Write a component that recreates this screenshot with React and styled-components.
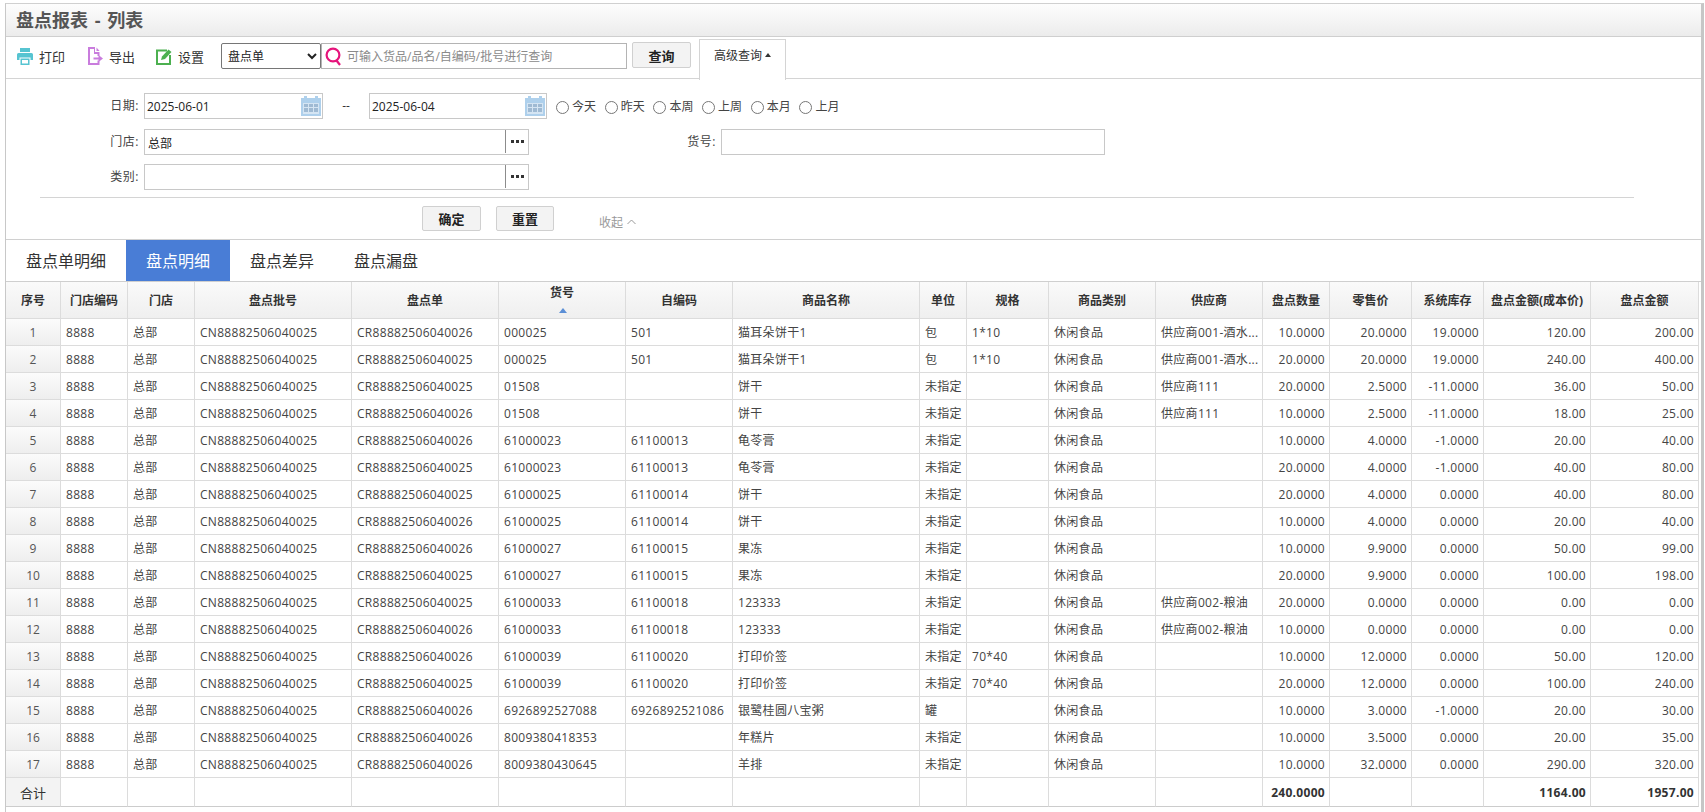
import React from 'react'
import styled, { createGlobalStyle } from 'styled-components'

const GlobalStyle = createGlobalStyle`
    html, body {
        margin: 0;
        padding: 0;
        background: #fff;
        overflow: hidden;
    }
    body, input, select, button {
        font-family: "Open Sans", "Noto Sans CJK SC", sans-serif;
    }
`

const Page = styled.div`
    box-sizing: border-box;
    height: 812px;
    padding: 3px 0 0 5px;
`

const Frame = styled.div`
    box-sizing: border-box;
    width: 1699px;
    height: 809px;
    border-left: 1px solid #c8c8c8;
    border-top: 1px solid #d0d0d0;
    border-right: 3px solid #c6c6c6;
`

const TitleBar = styled.div`
    height: 32px;
    line-height: 33px;
    padding-left: 10px;
    background: linear-gradient(#fdfdfd, #ececec);
    border-bottom: 1px solid #cfcfcf;
    font-size: 18px;
    font-weight: 700;
    word-spacing: 2px;
    color: #555;
`

const Toolbar = styled.div`
    display: flex;
    align-items: flex-start;
    box-sizing: content-box;
    height: 35px;
    padding: 6px 0 0 11px;
    border-bottom: 1px solid #d4d4d4;
`

const ToolButton = styled.a`
    display: flex;
    align-items: center;
    gap: 6px;
    height: 26px;
    margin-right: ${p => p.$mr || 22}px;
    font-size: 13px;
    color: #333;
`

const TypeSelect = styled.select`
    box-sizing: border-box;
    width: 100px;
    height: 26px;
    margin-left: -5px;
    padding-left: 2px;
    border: 1px solid #767676;
    border-radius: 2px;
    background: #fff;
    font-size: 12px;
    color: #222;
`

const SearchBox = styled.div`
    display: flex;
    align-items: center;
    box-sizing: border-box;
    width: 306px;
    height: 26px;
    padding-left: 3px;
    border: 1px solid #b4b4b4;
    gap: 5px;
`

const SearchInput = styled.input`
    flex: 1;
    min-width: 0;
    border: 0;
    outline: 0;
    padding: 0;
    font-size: 12px;
    &::placeholder {
        color: #8a8a8a;
        opacity: 1;
    }
`

const GreyButton = styled.button`
    box-sizing: border-box;
    width: ${p => p.$w}px;
    height: 25px;
    padding: 0;
    border: 1px solid #d0d0d0;
    border-radius: 2px;
    background: #f3f3f3;
    font-size: 13px;
    font-weight: 700;
    color: #222;
`

const QueryButton = styled(GreyButton)`
    height: 26px;
    margin: -1px 0 0 5px;
`

const AdvancedTab = styled.div`
    position: relative;
    display: flex;
    align-items: center;
    justify-content: center;
    gap: 3px;
    box-sizing: border-box;
    width: 87px;
    height: 41px;
    margin: -4px 0 0 8px;
    padding-bottom: 10px;
    border: 1px solid #d4d4d4;
    border-bottom: 0;
    background: #fff;
    font-size: 12px;
    color: #333;
`

const UpCaret = styled.i`
    width: 0;
    height: 0;
    border-left: ${p => p.$half || 3.5}px solid transparent;
    border-right: ${p => p.$half || 3.5}px solid transparent;
    border-bottom: ${p => (p.$half ? 5 : 4)}px solid ${p => p.$color || '#333'};
`

const FilterPanel = styled.div`
    box-sizing: border-box;
    height: 161px;
    padding-top: 14px;
    border-bottom: 1px solid #d0d0d0;
`

const Fields = styled.div`
    display: flex;
    flex-direction: column;
    gap: 9.5px;
`

const FieldRow = styled.div`
    display: flex;
    align-items: flex-start;
    height: 26px;
`

const FieldLabel = styled.label`
    box-sizing: border-box;
    width: ${p => p.$w}px;
    padding-right: 5px;
    line-height: 25px;
    text-align: right;
    font-size: 12px;
    letter-spacing: 0.5px;
    color: #444;
`

const DateBox = styled.div`
    display: flex;
    align-items: center;
    box-sizing: border-box;
    width: ${p => p.$w}px;
    height: 26px;
    padding: 0 1px 0 2px;
    border: 1px solid #c8c8c8;
`

const TextBox = styled.input`
    box-sizing: border-box;
    flex: ${p => (p.$w ? 'none' : 1)};
    width: ${p => (p.$w ? `${p.$w}px` : 'auto')};
    height: ${p => (p.$w ? '26px' : '22px')};
    min-width: 0;
    padding: 0 ${p => (p.$w ? 3 : 0)}px;
    border: ${p => (p.$w ? '1px solid #c8c8c8' : 0)};
    outline: 0;
    font-size: 12px;
    color: #222;
`

const DateDash = styled.span`
    width: 46px;
    line-height: 26px;
    text-align: center;
    font-size: 12px;
    color: #333;
`

const QuickRanges = styled.div`
    display: flex;
    margin-left: 9px;
    height: 26px;
    align-items: center;
`

const RangeOption = styled.label`
    display: flex;
    align-items: center;
    width: 48.7px;
    font-size: 12px;
    color: #444;
    input {
        width: 13px;
        height: 13px;
        margin: 3px 3px 0 0;
    }
`

const LookupBox = styled.div`
    display: flex;
    box-sizing: border-box;
    width: 385px;
    height: 26px;
    padding-left: 3px;
    border: 1px solid #c8c8c8;
    input {
        height: 24px;
        padding-top: 3px;
    }
`

const LookupDots = styled.div`
    display: flex;
    align-items: center;
    justify-content: center;
    box-sizing: border-box;
    width: 23px;
    height: 23px;
    border-left: 1px solid #8c8c8c;
`

const Divider = styled.div`
    width: 1594px;
    height: 1px;
    margin: 7px 0 8px 34px;
    background: #d4d4d4;
`

const ActionRow = styled.div`
    display: flex;
    align-items: flex-start;
    gap: 15px;
    padding-left: 416px;
`

const Collapse = styled.span`
    display: flex;
    align-items: center;
    gap: 4px;
    margin: 7px 0 0 30px;
    font-size: 12px;
    color: #999;
`

const TabBar = styled.div`
    display: flex;
    height: 41px;
    border-bottom: 1px solid #cfcfcf;
`

const Tab = styled.div`
    padding: 0 20px;
    line-height: 42px;
    font-size: 16px;
    color: ${p => (p.$active ? '#fff' : '#333')};
    background: ${p => (p.$active ? '#497dd6' : 'transparent')};
`

const Table = styled.table`
    table-layout: fixed;
    width: 1693px;
    border-collapse: separate;
    border-spacing: 0;
    font-size: 12px;
`

const Column = styled.col`
    width: ${p => p.$w}px;
`

const HeadCell = styled.th`
    box-sizing: border-box;
    height: 37px;
    padding: 0;
    border-right: 1px solid #dcdcdc;
    border-bottom: 1px solid #dcdcdc;
    background: linear-gradient(#fafafa, #efefef);
    font-weight: 700;
    color: #333;
    text-align: center;
    white-space: nowrap;
`

const SortMark = styled.div`
    display: flex;
    justify-content: center;
    margin: 7px 0 4px 2px;
`

const Cell = styled.td`
    box-sizing: border-box;
    height: 27px;
    padding: 0 ${p => (p.$right ? 4 : 3)}px 0 5px;
    border-right: 1px solid #dcdcdc;
    border-bottom: 1px solid #dcdcdc;
    text-align: ${p => (p.$right ? 'right' : 'left')};
    letter-spacing: 0.3px;
    color: #444;
    white-space: nowrap;
    overflow: hidden;
`

const IndexCell = styled(Cell)`
    padding: 0;
    text-align: center;
    letter-spacing: 0;
    color: #555;
    background: linear-gradient(#fbfbfb, #eeeeee);
`

const TotalCell = styled(Cell)`
    height: 29px;
    border-bottom: 1px solid #cccccc;
    font-weight: 700;
    color: #333;
`

const TotalLabel = styled(IndexCell)`
    height: 29px;
    border-bottom: 1px solid #cccccc;
    background: #f3f3f3;
    color: #333;
    font-size: 13px;
`

const CalendarSvg = styled.svg`
    flex: none;
`

const PrintIcon = () => (
    <svg width="16" height="17" viewBox="0 0 16 17" fill="#57c4d1">
        <path d="M3 0h10v4H3z" />
        <path d="M1.5 5h13A1.5 1.5 0 0 1 16 6.5V12h-2.5V9.5h-11V12H0V6.5A1.5 1.5 0 0 1 1.5 5z" />
        <path d="M3.5 10.5h9V17h-9zM5 12v3.5h6V12z" fillRule="evenodd" />
    </svg>
)

const ExportIcon = () => (
    <svg width="16" height="18" viewBox="0 0 16 18" fill="#c97cdd">
        <path d="M1 0h7v5h4.5v4h-2V7H7V2H3v14h7.5v-2.5h2V18H1z" />
        <path d="M9.5 0.4 12.6 4H9.5z" />
        <path d="M6.5 10.5h5V8l4.5 3.5L11.5 15v-2.5h-5z" />
    </svg>
)

const SettingIcon = () => (
    <svg width="16" height="17" viewBox="0 0 16 17" fill="none">
        <path d="M11 2.5H1v13.5h13V7" stroke="#4cb050" strokeWidth="2" />
        <path d="M5 12l1-3.5L12.5 1.5 15.5 4 9 11z" fill="#4cb050" />
    </svg>
)

const SearchIcon = () => (
    <svg width="17" height="19" viewBox="0 0 17 19" fill="none" stroke="#e6157c" strokeWidth="2.2">
        <circle cx="8" cy="8" r="6.4" />
        <path d="M11.5 13.5 15 18" />
    </svg>
)

const CalendarIcon = () => (
    <CalendarSvg width="20" height="20" viewBox="0 0 20 20">
        <path d="M0 2h3V0h3v2h8V0h3v2h3v18H0z" fill="#aed0ec" />
        <path d="M2 7h16v11H2z" fill="#d5e5f3" />
        <path d="M3 8h4v3H3zM8 8h4v3H8zM13 8h4v3h-4zM3 12h4v4H3zM8 12h4v4H8zM13 12h4v4h-4z" fill="#9fbad3" />
    </CalendarSvg>
)

const DotsIcon = () => (
    <svg width="13" height="3" viewBox="0 0 13 3" fill="#333">
        <path d="M0 0h3v3H0zM5 0h3v3H5zM10 0h3v3h-3z" />
    </svg>
)

const ChevronUp = () => (
    <svg width="9" height="6" viewBox="0 0 9 6" fill="none" stroke="#999" strokeWidth="1">
        <path d="M.5 5 4.5 1l4 4" />
    </svg>
)

const columns = [
    { title: '序号', w: 55 },
    { title: '门店编码', w: 67 },
    { title: '门店', w: 67 },
    { title: '盘点批号', w: 157 },
    { title: '盘点单', w: 147 },
    { title: '货号', w: 127, sort: true },
    { title: '自编码', w: 107 },
    { title: '商品名称', w: 187 },
    { title: '单位', w: 47 },
    { title: '规格', w: 82 },
    { title: '商品类别', w: 107 },
    { title: '供应商', w: 107 },
    { title: '盘点数量', w: 67, right: true },
    { title: '零售价', w: 82, right: true },
    { title: '系统库存', w: 72, right: true },
    { title: '盘点金额(成本价)', w: 107, right: true },
    { title: '盘点金额', w: 108, right: true },
]

// order, sku, code, name, unit, spec, supplier, qty, price, stock, cost, amount
const rows = [
    ['026', '000025', '501', '猫耳朵饼干1', '包', '1*10', '供应商001-酒水...', '10.0000', '20.0000', '19.0000', '120.00', '200.00'],
    ['025', '000025', '501', '猫耳朵饼干1', '包', '1*10', '供应商001-酒水...', '20.0000', '20.0000', '19.0000', '240.00', '400.00'],
    ['025', '01508', '', '饼干', '未指定', '', '供应商111', '20.0000', '2.5000', '-11.0000', '36.00', '50.00'],
    ['026', '01508', '', '饼干', '未指定', '', '供应商111', '10.0000', '2.5000', '-11.0000', '18.00', '25.00'],
    ['026', '61000023', '61100013', '龟苓膏', '未指定', '', '', '10.0000', '4.0000', '-1.0000', '20.00', '40.00'],
    ['025', '61000023', '61100013', '龟苓膏', '未指定', '', '', '20.0000', '4.0000', '-1.0000', '40.00', '80.00'],
    ['025', '61000025', '61100014', '饼干', '未指定', '', '', '20.0000', '4.0000', '0.0000', '40.00', '80.00'],
    ['026', '61000025', '61100014', '饼干', '未指定', '', '', '10.0000', '4.0000', '0.0000', '20.00', '40.00'],
    ['026', '61000027', '61100015', '果冻', '未指定', '', '', '10.0000', '9.9000', '0.0000', '50.00', '99.00'],
    ['025', '61000027', '61100015', '果冻', '未指定', '', '', '20.0000', '9.9000', '0.0000', '100.00', '198.00'],
    ['025', '61000033', '61100018', '123333', '未指定', '', '供应商002-粮油', '20.0000', '0.0000', '0.0000', '0.00', '0.00'],
    ['026', '61000033', '61100018', '123333', '未指定', '', '供应商002-粮油', '10.0000', '0.0000', '0.0000', '0.00', '0.00'],
    ['026', '61000039', '61100020', '打印价签', '未指定', '70*40', '', '10.0000', '12.0000', '0.0000', '50.00', '120.00'],
    ['025', '61000039', '61100020', '打印价签', '未指定', '70*40', '', '20.0000', '12.0000', '0.0000', '100.00', '240.00'],
    ['026', '6926892527088', '6926892521086', '银鹭桂圆八宝粥', '罐', '', '', '10.0000', '3.0000', '-1.0000', '20.00', '30.00'],
    ['026', '8009380418353', '', '年糕片', '未指定', '', '', '10.0000', '3.5000', '0.0000', '20.00', '35.00'],
    ['026', '8009380430645', '', '羊排', '未指定', '', '', '10.0000', '32.0000', '0.0000', '290.00', '320.00'],
]

const totals = { 12: '240.0000', 15: '1164.00', 16: '1957.00' }

const toCells = r => [
    '8888', '总部', 'CN88882506040025', `CR88882506040${r[0]}`,
    r[1], r[2], r[3], r[4], r[5], '休闲食品', r[6], r[7], r[8], r[9], r[10], r[11],
]

const ranges = ['今天', '昨天', '本周', '上周', '本月', '上月']

export default function App() {
    return (
        <Page>
            <GlobalStyle />
            <Frame>
                <TitleBar>盘点报表 - 列表</TitleBar>
                <Toolbar>
                    <ToolButton><PrintIcon />打印</ToolButton>
                    <ToolButton $mr={21}><ExportIcon />导出</ToolButton>
                    <ToolButton><SettingIcon />设置</ToolButton>
                    <TypeSelect defaultValue="盘点单">
                        <option>盘点单</option>
                    </TypeSelect>
                    <SearchBox>
                        <SearchIcon />
                        <SearchInput placeholder="可输入货品/品名/自编码/批号进行查询" />
                    </SearchBox>
                    <QueryButton $w={59}>查询</QueryButton>
                    <AdvancedTab>高级查询<UpCaret /></AdvancedTab>
                </Toolbar>
                <FilterPanel>
                    <Fields>
                        <FieldRow>
                            <FieldLabel $w={138}>日期:</FieldLabel>
                            <DateBox $w={179}>
                                <TextBox defaultValue="2025-06-01" />
                                <CalendarIcon />
                            </DateBox>
                            <DateDash>--</DateDash>
                            <DateBox $w={178}>
                                <TextBox defaultValue="2025-06-04" />
                                <CalendarIcon />
                            </DateBox>
                            <QuickRanges>
                                {ranges.map(r => (
                                    <RangeOption key={r}><input type="radio" name="range" />{r}</RangeOption>
                                ))}
                            </QuickRanges>
                        </FieldRow>
                        <FieldRow>
                            <FieldLabel $w={138}>门店:</FieldLabel>
                            <LookupBox>
                                <TextBox defaultValue="总部" />
                                <LookupDots><DotsIcon /></LookupDots>
                            </LookupBox>
                            <FieldLabel $w={192}>货号:</FieldLabel>
                            <TextBox $w={384} />
                        </FieldRow>
                        <FieldRow>
                            <FieldLabel $w={138}>类别:</FieldLabel>
                            <LookupBox>
                                <TextBox />
                                <LookupDots><DotsIcon /></LookupDots>
                            </LookupBox>
                        </FieldRow>
                    </Fields>
                    <Divider />
                    <ActionRow>
                        <GreyButton $w={59}>确定</GreyButton>
                        <GreyButton $w={58}>重置</GreyButton>
                        <Collapse>收起<ChevronUp /></Collapse>
                    </ActionRow>
                </FilterPanel>
                <TabBar>
                    <Tab>盘点单明细</Tab>
                    <Tab $active>盘点明细</Tab>
                    <Tab>盘点差异</Tab>
                    <Tab>盘点漏盘</Tab>
                </TabBar>
                <Table>
                    <colgroup>
                        {columns.map(c => <Column key={c.title} $w={c.w} />)}
                    </colgroup>
                    <thead>
                        <tr>
                            {columns.map(c => (
                                <HeadCell key={c.title}>
                                    {c.title}
                                    {c.sort && <SortMark><UpCaret $color="#5b8fd6" $half={4} /></SortMark>}
                                </HeadCell>
                            ))}
                        </tr>
                    </thead>
                    <tbody>
                        {rows.map((r, i) => (
                            <tr key={i}>
                                <IndexCell>{i + 1}</IndexCell>
                                {toCells(r).map((v, j) => (
                                    <Cell key={j} $right={columns[j + 1].right}>{v}</Cell>
                                ))}
                            </tr>
                        ))}
                        <tr>
                            <TotalLabel>合计</TotalLabel>
                            {columns.slice(1).map((c, j) => (
                                <TotalCell key={c.title} $right={c.right}>{totals[j + 1]}</TotalCell>
                            ))}
                        </tr>
                    </tbody>
                </Table>
            </Frame>
        </Page>
    )
}
